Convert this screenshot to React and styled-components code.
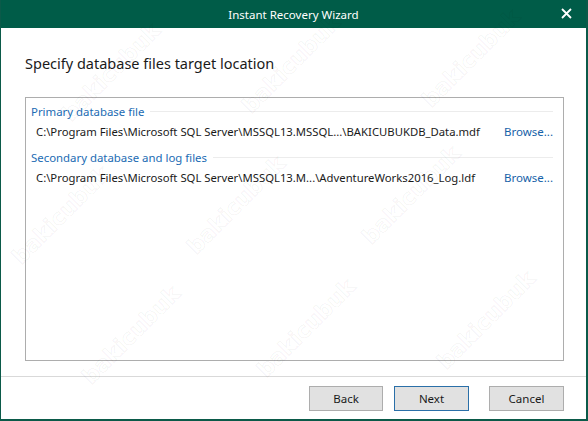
import React from "react";
import styled, { createGlobalStyle } from "styled-components";

const GlobalStyle = createGlobalStyle`
  html, body {
    margin: 0;
    padding: 0;
    background: #ffffff;
  }
  body {
    font-family: "Noto Sans", "Open Sans", sans-serif;
  }
`;

const Window = styled.div`
  position: relative;
  width: 588px;
  height: 421px;
  box-sizing: border-box;
  border-left: 1px solid #0b5a49;
  border-right: 2px solid #0b5a49;
  border-bottom: 2px solid #0b5a49;
  display: flex;
  flex-direction: column;
  overflow: hidden;
  background: #ffffff;
`;

const TitleBar = styled.div`
  height: 28px;
  flex: none;
  background: #005c48;
  color: #ffffff;
  display: flex;
  align-items: center;
  justify-content: center;
  position: relative;
  font-size: 11.5px;
`;

const CloseButton = styled.div`
  position: absolute;
  right: 14px;
  top: 8px;
  width: 11px;
  height: 11px;
  display: flex;
`;

const Content = styled.div`
  flex: 1;
  display: flex;
  flex-direction: column;
  padding: 0 22px 0 24px;
`;

const Heading = styled.h1`
  margin: 24px 0 0 0;
  font-size: 14.5px;
  font-weight: 400;
  color: #1a1a1a;
  line-height: 22px;
`;

const ListBox = styled.div`
  margin-top: 23px;
  height: 264px;
  box-sizing: border-box;
  border: 1px solid #adadad;
  display: flex;
  flex-direction: column;
  padding: 3px 10px 0 5px;
`;

const GroupHeader = styled.div`
  display: flex;
  align-items: center;
  gap: 6px;
  height: 20px;
  color: #1b6bb3;
  font-size: 11.4px;

  &::after {
    content: "";
    flex: 1;
    height: 1px;
    background: #ececec;
  }
`;

const FileRow = styled.div`
  display: flex;
  align-items: center;
  justify-content: space-between;
  height: 20px;
  padding: 0 0 6px 5px;
  font-size: 11.3px;
  color: #1a1a1a;
`;

const BrowseLink = styled.span`
  color: #1661a8;
  cursor: pointer;
  font-size: 11.5px;
`;

const Footer = styled.div`
  flex: none;
  height: 41px;
  border-top: 1px solid #d9d9d9;
  margin-top: 15px;
  display: flex;
  align-items: flex-start;
  justify-content: flex-end;
  padding: 9px 22px 0 0;
`;

const Button = styled.button`
  width: ${(p) => (p.$wide ? 75 : 74)}px;
  height: 25px;
  margin-left: ${(p) => p.$gap}px;
  box-sizing: border-box;
  background: #e1e1e1;
  border: 1px solid ${(p) => (p.$primary ? "#2a6fa8" : "#adadad")};
  font-family: inherit;
  font-size: 11.5px;
  color: #1a1a1a;
  padding: 0;
`;

const WatermarkLayer = styled.div`
  position: absolute;
  inset: 0;
  pointer-events: none;
  overflow: hidden;
`;

const Mark = styled.span`
  position: absolute;
  font-family: "DejaVu Sans", sans-serif;
  font-weight: 700;
  font-size: 22px;
  color: transparent;
  -webkit-text-stroke: 1px rgba(0, 0, 0, 0.05);
  transform: translate(-50%, -50%) rotate(-45deg);
  white-space: nowrap;
`;

const marks = [
  [110, 72], [290, 64], [470, 58],
  [60, 215], [235, 205], [410, 195],
  [130, 335], [305, 328], [485, 320],
];

const rows = [
  {
    group: "Primary database file",
    path: "C:\\Program Files\\Microsoft SQL Server\\MSSQL13.MSSQL...\\BAKICUBUKDB_Data.mdf",
  },
  {
    group: "Secondary database and log files",
    path: "C:\\Program Files\\Microsoft SQL Server\\MSSQL13.M...\\AdventureWorks2016_Log.ldf",
  },
];

export default function App() {
  return (
    <>
      <GlobalStyle />
      <Window>
        <TitleBar>
          Instant Recovery Wizard
          <CloseButton>
            <svg width="11" height="11" viewBox="0 0 11 11">
              <path d="M1 1 L10 10 M10 1 L1 10" stroke="#ffffff" strokeWidth="1.8" />
            </svg>
          </CloseButton>
        </TitleBar>
        <Content>
          <Heading>Specify database files target location</Heading>
          <ListBox>
            {rows.map((r) => (
              <React.Fragment key={r.group}>
                <GroupHeader>{r.group}</GroupHeader>
                <FileRow>
                  <span>{r.path}</span>
                  <BrowseLink>Browse...</BrowseLink>
                </FileRow>
              </React.Fragment>
            ))}
          </ListBox>
        </Content>
        <Footer>
          <Button $gap={0}>Back</Button>
          <Button $gap={11} $primary $wide>Next</Button>
          <Button $gap={20} $wide>Cancel</Button>
        </Footer>
        <WatermarkLayer>
          {marks.map(([x, y], i) => (
            <Mark key={i} style={{ left: x, top: y }}>bakicubuk</Mark>
          ))}
        </WatermarkLayer>
      </Window>
    </>
  );
}
